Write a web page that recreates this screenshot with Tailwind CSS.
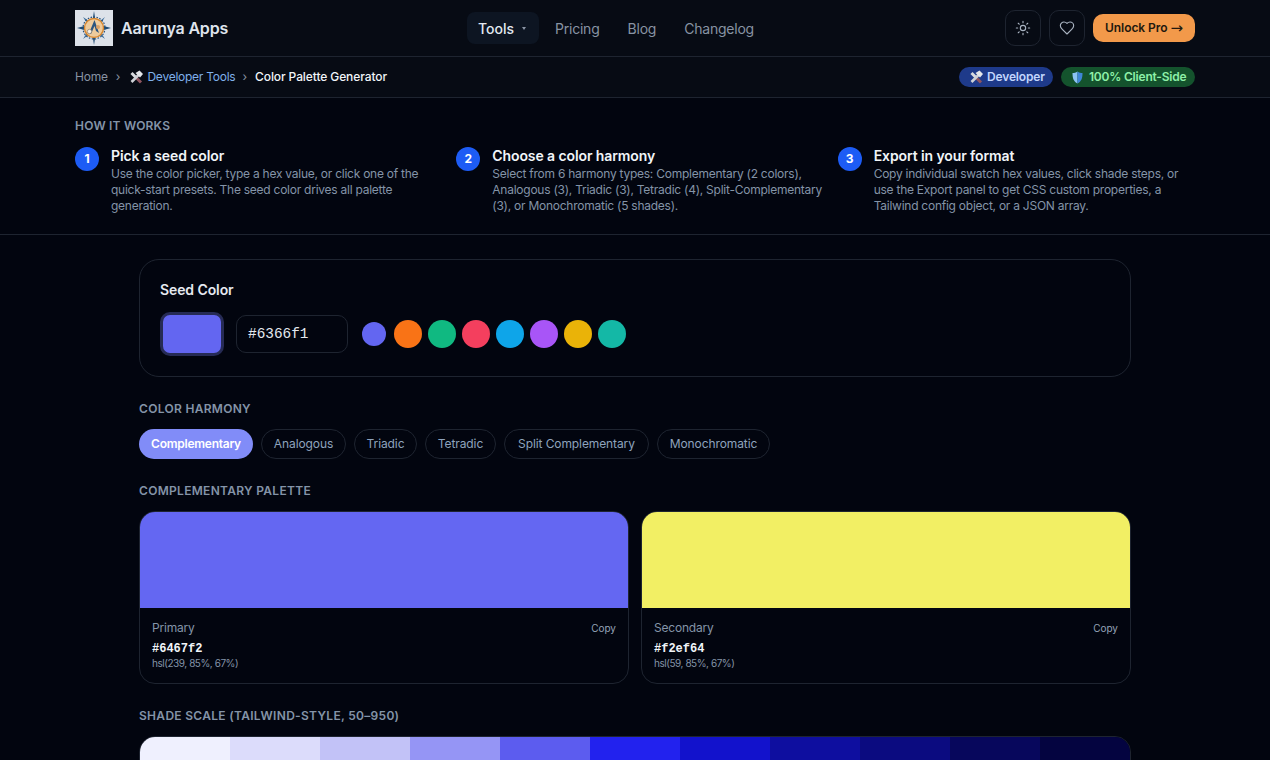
<!DOCTYPE html>
<html lang="en">
<head>
    <meta charset="UTF-8">
    <meta name="viewport" content="width=device-width, initial-scale=1.0">
    <title>Color Palette Generator</title>
    <script src="https://cdn.jsdelivr.net/npm/@tailwindcss/browser@4"></script>
</head>
<body class="h-[760px] overflow-hidden bg-[#02050f] font-['Inter',sans-serif] text-slate-100">

    <!-- top nav -->
    <header class="h-[57px] bg-[#070b14] border-b border-[#1e2430]">
        <div class="w-[1120px] mx-auto h-[56px] flex items-center relative">
            <div class="flex items-center gap-2 w-[392px]">
                <svg class="w-[38px] h-[36px]" viewBox="0 0 38 36">
                    <rect width="38" height="36" fill="#dde2e9"/>
                    <path d="M19 1 L21 14 L36 18 L21 22 L19 35 L17 22 L2 18 L17 14 Z" fill="#1d4a73"/>
                    <path d="M8 7 L20 15 L30 7 L23 18 L30 29 L19 21 L8 29 L15 18 Z" fill="#3c6d99"/>
                    <circle cx="19" cy="18" r="11" fill="none" stroke="#27507a" stroke-width="1.2" stroke-dasharray="1.5 1.5"/>
                    <circle cx="19" cy="18" r="9.5" fill="#eecb9c" stroke="#d8872f" stroke-width="1.4"/>
                    <path d="M19.500 10 L24 23 L21 21 L19.500 16 L16 24 L14 23 Z" fill="#2b5580"/>
                    <circle cx="14.500" cy="21.500" r="2.200" fill="#f6f2ea" stroke="#7a6a58" stroke-width="0.6"/>
                    <circle cx="23" cy="17" r="2" fill="#d9a066"/>
                </svg>
                <span class="text-[16px] font-semibold tracking-[-0.2px] text-[#dfe4ec]">Aarunya Apps</span>
            </div>
            <nav class="flex items-center gap-1 text-[14px] tracking-[-0.22px] text-[#8893a3]">
                <span class="w-[72px] h-8 pl-[11px] flex items-center gap-2 rounded-lg bg-[#0d1522] text-[#e2e8f0] font-medium tracking-normal">Tools
                    <span class="w-0 h-0 border-x-[2.5px] border-x-transparent border-t-[3px] border-t-[#8b95a5]"></span>
                </span>
                <span class="h-8 px-3 flex items-center">Pricing</span>
                <span class="h-8 px-3 flex items-center">Blog</span>
                <span class="h-8 px-3 flex items-center">Changelog</span>
            </nav>
            <div class="ml-auto flex items-center gap-2">
                <span class="w-9 h-9 rounded-[10px] border border-[#1e2430] flex items-center justify-center">
                    <svg class="w-4 h-4 text-[#aab4c2]" viewBox="0 0 24 24" fill="none" stroke="currentColor" stroke-width="1.700" stroke-linecap="round">
                        <circle cx="12" cy="12" r="4"/>
                        <path d="M12 2v2M12 20v2M4.900 4.900l1.400 1.400M17.700 17.700l1.400 1.400M2 12h2M20 12h2M6.300 17.700l-1.400 1.400M19.100 4.900l-1.400 1.400"/>
                    </svg>
                </span>
                <span class="w-9 h-9 rounded-[10px] border border-[#1e2430] flex items-center justify-center">
                    <svg class="w-4 h-4 text-[#aab4c2]" viewBox="0 0 24 24" fill="none" stroke="currentColor" stroke-width="1.700" stroke-linejoin="round">
                        <path d="M19 14c1.500-1.500 3-3.200 3-5.500A5.500 5.500 0 0 0 16.500 3c-1.800 0-3 .5-4.500 2-1.500-1.500-2.700-2-4.500-2A5.500 5.500 0 0 0 2 8.500c0 2.300 1.500 4 3 5.500l7 7Z"/>
                    </svg>
                </span>
                <span class="w-[102px] h-7 rounded-[10px] bg-[#f2994a] text-[#21180e] text-[12px] font-semibold tracking-[-0.05px] flex items-center justify-center gap-[3px]">Unlock Pro <span class="font-['DejaVu_Sans',sans-serif] font-normal text-[15px] leading-none">→</span></span>
            </div>
        </div>
    </header>

    <!-- breadcrumb -->
    <div class="h-[41px] bg-[#070b14] border-b border-[#1e2430]">
        <div class="w-[1120px] mx-auto h-10 flex items-center text-[12px]">
            <span class="text-[#8893a3] tracking-[-0.2px]">Home</span>
            <span class="mx-2 text-[#8893a3]">›</span>
            <span class="ml-px flex items-center gap-1 text-[#7fb0ea] tracking-[-0.25px]">
                <svg class="w-[14px] h-[14px]" viewBox="0 0 14 14" fill="none">
                    <path d="M2.500 3 L7 7.500" stroke="#d8dade" stroke-width="3"/>
                    <path d="M7.500 8 L12 12.500" stroke="#8f5560" stroke-width="3"/>
                    <path d="M10 4.500 L2.500 12" stroke="#cfd2d7" stroke-width="2.600"/>
                    <path d="M6.500 3 L10.500 0.500 L14 4 L11 7.500 Z" fill="#e4e6ea"/>
                </svg>
                Developer Tools
            </span>
            <span class="ml-[7px] mr-2 text-[#8893a3]">›</span>
            <span class="text-[#f1f5f9] font-medium tracking-[-0.1px]">Color Palette Generator</span>
            <div class="ml-auto flex items-center gap-2 font-semibold">
                <span class="w-[94px] h-5 pl-2.5 rounded-full bg-[#1e3a8a] text-[#c3d6fd] tracking-[-0.15px] flex items-center gap-1">
                    <svg class="w-[14px] h-[14px]" viewBox="0 0 14 14" fill="none">
                        <path d="M2.500 3 L7 7.500" stroke="#d8dade" stroke-width="3"/>
                        <path d="M7.500 8 L12 12.500" stroke="#8f5560" stroke-width="3"/>
                        <path d="M10 4.500 L2.500 12" stroke="#cfd2d7" stroke-width="2.600"/>
                        <path d="M6.500 3 L10.500 0.500 L14 4 L11 7.500 Z" fill="#e4e6ea"/>
                    </svg>
                    Developer
                </span>
                <span class="w-[134px] h-5 pl-[11px] rounded-full bg-[#14532d] text-[#8ef0a8] tracking-[-0.2px] flex items-center gap-[6px]">
                    <svg class="w-[11px] h-[13px]" viewBox="0 0 11 13">
                        <path d="M5.500 0.500 C4 1.500 2 2 0.500 2 C0.500 7 1.500 10.500 5.500 12.500 Z" fill="#8cc3f4"/>
                        <path d="M5.500 0.500 C7 1.500 9 2 10.500 2 C10.500 7 9.500 10.500 5.500 12.500 Z" fill="#3f86d8"/>
                    </svg>
                    100% Client-Side
                </span>
            </div>
        </div>
    </div>

    <!-- how it works -->
    <section class="h-[137px] border-b border-[#1e2430]">
        <div class="w-[1120px] mx-auto pt-5">
            <h2 class="text-[12px] leading-4 font-semibold tracking-[0.2px] text-[#8494a8]">HOW IT WORKS</h2>
            <div class="grid grid-cols-3 gap-6 mt-[13px]">
                <div class="flex gap-3">
                    <span class="shrink-0 w-6 h-6 rounded-full bg-[#1d5cf5] text-white text-[12px] font-bold flex items-center justify-center">1</span>
                    <div>
                        <h3 class="text-[14px] leading-[17px] font-semibold tracking-[-0.1px] text-[#f1f5f9]">Pick a seed color</h3>
                        <p class="mt-0.5 text-[12px] leading-4 tracking-[-0.25px] text-[#8494a8]">Use the color picker, type a hex value, or click one of the quick-start presets. The seed color drives all palette generation.</p>
                    </div>
                </div>
                <div class="flex gap-3">
                    <span class="shrink-0 w-6 h-6 rounded-full bg-[#1d5cf5] text-white text-[12px] font-bold flex items-center justify-center">2</span>
                    <div>
                        <h3 class="text-[14px] leading-[17px] font-semibold tracking-[-0.1px] text-[#f1f5f9]">Choose a color harmony</h3>
                        <p class="w-[330px] mt-0.5 text-[12px] leading-4 tracking-[-0.25px] text-[#8494a8]">Select from 6 harmony types: Complementary (2 colors), Analogous (3), Triadic (3), Tetradic (4), Split-Complementary (3), or Monochromatic (5 shades).</p>
                    </div>
                </div>
                <div class="flex gap-3">
                    <span class="shrink-0 w-6 h-6 rounded-full bg-[#1d5cf5] text-white text-[12px] font-bold flex items-center justify-center">3</span>
                    <div>
                        <h3 class="text-[14px] leading-[17px] font-semibold tracking-[-0.1px] text-[#f1f5f9]">Export in your format</h3>
                        <p class="mt-0.5 text-[12px] leading-4 tracking-[-0.25px] text-[#8494a8]">Copy individual swatch hex values, click shade steps, or use the Export panel to get CSS custom properties, a Tailwind config object, or a JSON array.</p>
                    </div>
                </div>
            </div>
        </div>
    </section>

    <main class="w-[992px] mx-auto pt-6">
        <!-- seed color -->
        <section class="h-[118px] rounded-[20px] border border-[#1e2430] px-5 pt-5">
            <h3 class="text-[14px] leading-5 font-semibold tracking-[-0.1px] text-[#e5e9f0]">Seed Color</h3>
            <div class="flex items-center mt-3">
                <span class="w-16 h-11 rounded-[10px] bg-[#6366f1] border-[3px] border-[#262b55]"></span>
                <span class="w-[112px] h-[38px] ml-3 pl-[11px] pt-0.5 rounded-[10px] border border-[#1e2430] flex items-center font-['Liberation_Mono',monospace] text-[14.4px] text-[#e5e9f0]">#6366f1</span>
                <div class="flex items-center gap-1.5 ml-3.5">
                    <span class="w-6 h-6 mr-0.5 rounded-full bg-[#6366f1]"></span>
                    <span class="w-7 h-7 rounded-full bg-[#f97316]"></span>
                    <span class="w-7 h-7 rounded-full bg-[#10b981]"></span>
                    <span class="w-7 h-7 rounded-full bg-[#f43f5e]"></span>
                    <span class="w-7 h-7 rounded-full bg-[#0ea5e9]"></span>
                    <span class="w-7 h-7 rounded-full bg-[#a855f7]"></span>
                    <span class="w-7 h-7 rounded-full bg-[#eab308]"></span>
                    <span class="w-7 h-7 rounded-full bg-[#14b8a6]"></span>
                </div>
            </div>
        </section>

        <!-- harmony -->
        <h2 class="mt-6 text-[12px] leading-4 font-semibold tracking-[0.3px] text-[#8494a8]">COLOR HARMONY</h2>
        <div class="flex gap-2 mt-3 text-[12px] tracking-[-0.1px] text-[#8ea3bd]">
            <span class="w-[114px] h-[30px] rounded-full bg-[#818cf8] text-white font-semibold tracking-[-0.25px] flex items-center justify-center">Complementary</span>
            <span class="w-[85px] h-[30px] rounded-full border border-[#1e2430] flex items-center justify-center">Analogous</span>
            <span class="w-[63px] h-[30px] rounded-full border border-[#1e2430] flex items-center justify-center">Triadic</span>
            <span class="w-[71px] h-[30px] rounded-full border border-[#1e2430] flex items-center justify-center">Tetradic</span>
            <span class="w-[145px] h-[30px] rounded-full border border-[#1e2430] flex items-center justify-center">Split Complementary</span>
            <span class="w-[113px] h-[30px] rounded-full border border-[#1e2430] flex items-center justify-center">Monochromatic</span>
        </div>

        <!-- palette -->
        <h2 class="mt-6 text-[12px] leading-4 font-semibold tracking-[0.3px] text-[#8494a8]">COMPLEMENTARY PALETTE</h2>
        <div class="grid grid-cols-2 gap-3 mt-3">
            <div class="h-[173px] rounded-2xl border border-[#1e2430] overflow-hidden">
                <div class="h-24 bg-[#6467f2]"></div>
                <div class="px-3 pt-3 relative">
                    <p class="text-[12px] leading-4 tracking-[-0.2px] text-[#8494a8]">Primary</p>
                    <span class="absolute right-3 top-3 text-[10px] leading-4 text-[#94a3b8]">Copy</span>
                    <p class="mt-[5px] font-['Liberation_Mono',monospace] text-[12px] leading-4 font-bold text-[#f1f5f9]">#6467f2</p>
                    <p class="text-[10px] leading-[13px] tracking-[-0.45px] text-[#8494a8]">hsl(239, 85%, 67%)</p>
                </div>
            </div>
            <div class="h-[173px] rounded-2xl border border-[#1e2430] overflow-hidden">
                <div class="h-24 bg-[#f2ef64]"></div>
                <div class="px-3 pt-3 relative">
                    <p class="text-[12px] leading-4 tracking-[-0.2px] text-[#8494a8]">Secondary</p>
                    <span class="absolute right-3 top-3 text-[10px] leading-4 text-[#94a3b8]">Copy</span>
                    <p class="mt-[5px] font-['Liberation_Mono',monospace] text-[12px] leading-4 font-bold text-[#f1f5f9]">#f2ef64</p>
                    <p class="text-[10px] leading-[13px] tracking-[-0.45px] text-[#8494a8]">hsl(59, 85%, 67%)</p>
                </div>
            </div>
        </div>

        <!-- shades -->
        <h2 class="mt-6 text-[12px] leading-4 font-semibold tracking-[0.3px] text-[#8494a8]">SHADE SCALE (TAILWIND-STYLE, 50–950)</h2>
        <div class="flex mt-3 h-16 rounded-2xl border border-[#1e2430] overflow-hidden">
            <span class="flex-1 bg-[#eff0fe]"></span>
            <span class="flex-1 bg-[#dcdcfb]"></span>
            <span class="flex-1 bg-[#c2c2f7]"></span>
            <span class="flex-1 bg-[#9595f5]"></span>
            <span class="flex-1 bg-[#5c5cef]"></span>
            <span class="flex-1 bg-[#2222ee]"></span>
            <span class="flex-1 bg-[#1212cc]"></span>
            <span class="flex-1 bg-[#0e0e9f]"></span>
            <span class="flex-1 bg-[#0b0b80]"></span>
            <span class="flex-1 bg-[#07075c]"></span>
            <span class="flex-1 bg-[#040440]"></span>
        </div>
    </main>
</body>
</html>
